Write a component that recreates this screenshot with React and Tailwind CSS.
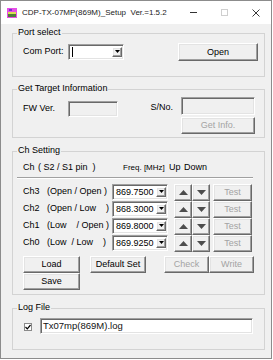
import React from "react";

const sunken =
  "border border-t-[#a0a0a0] border-l-[#a0a0a0] border-r-white border-b-white shadow-[inset_1px_1px_0_#696969,inset_-1px_-1px_0_#e3e3e3]";
const raised =
  "border border-t-white border-l-white border-r-[#696969] border-b-[#696969] shadow-[inset_-1px_-1px_0_#a0a0a0,inset_1px_1px_0_#e3e3e3] bg-[#f0f0f0]";

const Btn = ({ className = "", disabled, children }) => (
  <div
    className={`${raised} flex items-center justify-center leading-none ${
      disabled ? "text-[#a3a3a3]" : "text-black"
    } ${className}`}
  >
    {children}
  </div>
);

const DropArrow = () => (
  <div className={`${raised} h-full w-[10px] shrink-0 flex items-center justify-center`}>
    <svg width="5" height="4" viewBox="0 0 5 4">
      <polygon points="0,0 5,0 2.5,3" fill="#000" />
    </svg>
  </div>
);

const Combo = ({ className = "", value }) => (
  <div className={`${sunken} bg-white flex items-stretch py-[2px] pl-[2px] pr-[1px] ${className}`}>
    <div className="flex-1 flex items-center pl-[1px] leading-none whitespace-nowrap overflow-hidden">
      {value ?? <span className="w-[1px] h-[10px] bg-black" />}
    </div>
    <DropArrow />
  </div>
);

const Arrow = ({ up }) => (
  <div className={`${raised} w-[18px] h-full flex items-center justify-center`}>
    <svg width="9" height="5" viewBox="0 0 9 5">
      <polygon points={up ? "0,5 9,5 4.5,0" : "0,0 9,0 4.5,5"} fill="#4d4d4d" />
    </svg>
  </div>
);

const Group = ({ title, className = "", children }) => (
  <div className={`relative ml-[11px] w-[253px] border border-[#d3d3d3] ${className}`}>
    <span className="absolute -top-[7px] left-[4px] px-[1px] bg-[#f0f0f0] leading-[11px]">
      {title}
    </span>
    {children}
  </div>
);

const channels = [
  { label: "Ch3   (Open / Open )", freq: "869.7500" },
  { label: "Ch2   (Open / Low    )", freq: "868.3000" },
  { label: "Ch1   (Low    / Open )", freq: "869.8000" },
  { label: "Ch0   (Low  / Low    )", freq: "869.9250" },
];

export default function App() {
  return (
    <div className="w-[273px] h-[360px] bg-white">
      <div
        className="w-[272px] h-[359px] border border-[#8c8c8c] bg-[#f0f0f0] flex flex-col text-[9px] text-black"
        style={{ fontFamily: '"Liberation Sans", Arial, sans-serif' }}
      >
        {/* title bar */}
        <div className="h-[23px] bg-white flex items-center shrink-0">
          <svg className="ml-[6px]" width="10" height="10" viewBox="0 0 10 10">
            <rect x="0" y="0" width="10" height="10" fill="#e64ee6" />
            <rect x="2" y="1" width="3" height="2" fill="#7a2bd0" />
            <rect x="1" y="4" width="8" height="2" fill="#d8e050" />
            <rect x="1" y="6" width="8" height="3" fill="#4f7d3a" />
          </svg>
          <span className="ml-[5px] text-[8px] whitespace-pre text-[#222]">
            CDP-TX-07MP(869M)_Setup  Ver.=1.5.2
          </span>
          <div className="ml-auto flex h-full">
            <div className="w-[31px] flex items-center justify-center">
              <span className="w-[7px] h-[1px] bg-[#333]" />
            </div>
            <div className="w-[31px] flex items-center justify-center">
              <span className="w-[7px] h-[7px] border border-[#cfcfcf]" />
            </div>
            <div className="w-[31px] flex items-center justify-center">
              <svg width="8" height="8" viewBox="0 0 8 8">
                <path d="M0.5 0.5 L7.5 7.5 M7.5 0.5 L0.5 7.5" stroke="#222" strokeWidth="0.9" />
              </svg>
            </div>
          </div>
        </div>

        {/* Port select */}
        <Group title="Port select" className="mt-[9px] h-[44px]">
          <div className="flex items-center h-[18px] mt-[9px] pl-[10px] pr-[6px]">
            <span className="w-[45px]">Com Port:</span>
            <Combo className="w-[56px] h-[16px]" />
            <Btn className="ml-auto w-[80px] h-[18px]">Open</Btn>
          </div>
        </Group>

        {/* Get Target Information */}
        <Group title="Get Target Information" className="mt-[12px] h-[49px]">
          <div className="flex pt-[7px] pl-[10px] pr-[9px]">
            <div className="flex items-center mt-[4px] h-[16px]">
              <span className="w-[45px]">FW Ver.</span>
              <div className={`${sunken} w-[50px] h-[16px] bg-[#f0f0f0]`} />
            </div>
            <div className="ml-auto flex flex-col items-end">
              <div className="flex items-center">
                <span className="mr-[8px] mt-[4px]">S/No.</span>
                <div className={`${sunken} w-[74px] h-[18px] bg-[#f0f0f0]`} />
              </div>
              <Btn disabled className="mt-[2px] w-[74px] h-[17px]">
                Get Info.
              </Btn>
            </div>
          </div>
        </Group>

        {/* Ch Setting */}
        <Group title="Ch Setting" className="mt-[13px] h-[144px]">
          <div className="flex items-baseline pt-[10px] pl-[10px] leading-[11px] whitespace-pre">
            <span className="w-[15px]">Ch</span>
            <span className="w-[85px]">( S2 / S1 pin  )</span>
            <span className="w-[46px] text-[8px]">Freq. [MHz]</span>
            <span className="w-[15px]">Up</span>
            <span>Down</span>
          </div>
          <div className="ml-[4px] mt-[4px] w-[236px] border-t border-t-[#a0a0a0] border-b border-b-white" />
          <div className="flex flex-col gap-[1px] mt-[5px] pl-[10px]">
            {channels.map((c) => (
              <div key={c.label} className="flex items-center h-[16px]">
                <span className="w-[89px] whitespace-pre">{c.label}</span>
                <Combo className="w-[56px] h-[16px]" value={c.freq} />
                <div className="flex h-[17px] ml-[6px]">
                  <Arrow up />
                  <Arrow />
                </div>
                <Btn disabled className="ml-[3px] w-[39px] h-[17px]">
                  Test
                </Btn>
              </div>
            ))}
          </div>
          <div className="flex items-start mt-[5px] pl-[10px] pr-[10px]">
            <div className="flex flex-col">
              <Btn className="w-[57px] h-[17px]">Load</Btn>
              <Btn className="w-[57px] h-[17px]">Save</Btn>
            </div>
            <Btn className="ml-[10px] w-[56px] h-[17px]">Default Set</Btn>
            <div className="ml-auto flex">
              <Btn disabled className="w-[45px] h-[17px]">
                Check
              </Btn>
              <Btn disabled className="w-[45px] h-[17px]">
                Write
              </Btn>
            </div>
          </div>
        </Group>

        {/* Log File */}
        <Group title="Log File" className="mt-[13px] h-[42px]">
          <div className="flex items-start pt-[9px] pl-[11px]">
            <div className="mt-[5px] w-[8px] h-[8px] border border-[#8a8a8a] bg-white flex items-center justify-center">
              <svg width="6" height="6" viewBox="0 0 6 6">
                <path d="M0.5 3 L2.3 4.8 L5.5 1" fill="none" stroke="#000" strokeWidth="1.2" />
              </svg>
            </div>
            <div className={`${sunken} ml-[8px] w-[213px] h-[16px] bg-white flex items-center pl-[2px] text-[9.5px] leading-none text-[#111]`}>
              Tx07mp(869M).log
            </div>
          </div>
        </Group>
      </div>
    </div>
  );
}
